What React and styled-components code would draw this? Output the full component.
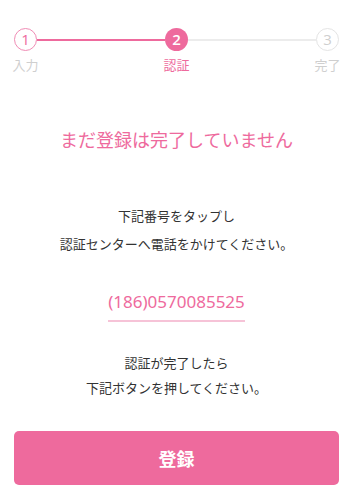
import React from 'react';
import styled, { createGlobalStyle, css } from 'styled-components';

const PINK = '#ee6a9d';
const GREY = '#cfcfcf';

const GlobalStyle = createGlobalStyle`
    html, body {
        margin: 0;
        padding: 0;
        background: #fff;
    }
    body {
        font-family: "Noto Sans CJK JP", "Noto Sans", sans-serif;
        color: #333;
    }
`;

const Page = styled.div`
    padding: 28px 14px 0;
    display: flex;
    flex-direction: column;
    align-items: center;
`;

const Stepper = styled.div`
    align-self: stretch;
    display: flex;
    align-items: flex-start;
`;

const Step = styled.div`
    width: 23px;
    display: flex;
    flex-direction: column;
    align-items: center;
`;

const Circle = styled.div`
    box-sizing: border-box;
    width: 23px;
    height: 23px;
    border-radius: 50%;
    display: flex;
    align-items: center;
    justify-content: center;
    font-size: 15px;
    line-height: 1;
    font-family: "Open Sans", "Noto Sans", sans-serif;
    ${({ $state }) => $state === 'done' && css`
        border: 1.5px solid #f08cb5;
        color: ${PINK};
        background: #fff;
    `}
    ${({ $state }) => $state === 'active' && css`
        background: ${PINK};
        color: #fff;
        font-weight: 600;
    `}
    ${({ $state }) => $state === 'todo' && css`
        border: 1.5px solid #e4e4e4;
        color: ${GREY};
        background: #fff;
    `}
`;

const StepLabel = styled.div`
    margin-top: 5px;
    white-space: nowrap;
    font-size: 13px;
    line-height: 18px;
    color: ${({ $active }) => ($active ? PINK : GREY)};
`;

const Connector = styled.div`
    flex: 1;
    height: 2px;
    margin-top: 10.5px;
    background: ${({ $done }) => ($done ? PINK : '#ececec')};
`;

const Title = styled.h1`
    margin: 52px 0 0;
    font-size: 18px;
    font-weight: 400;
    line-height: 26px;
    color: ${PINK};
    text-align: center;
`;

const Message = styled.p`
    margin: ${({ $top }) => $top}px 0 0;
    font-size: 13px;
    line-height: ${({ $lh }) => $lh}px;
    color: #333;
    text-align: center;
`;

const PhoneLink = styled.a`
    margin-top: 32px;
    display: inline-block;
    padding-bottom: 6px;
    border-bottom: 2px solid #f6c3d7;
    font-size: 17px;
    line-height: 24px;
    color: ${PINK};
    text-decoration: none;
    font-family: "Noto Sans", sans-serif;
`;

const SubmitButton = styled.button`
    align-self: stretch;
    margin-top: 31px;
    height: 54px;
    border: 0;
    border-radius: 5px;
    background: ${PINK};
    color: #fff;
    font-family: inherit;
    font-size: 18px;
    font-weight: 700;
    cursor: pointer;
`;

const steps = [
    { num: 1, label: '入力', state: 'done' },
    { num: 2, label: '認証', state: 'active' },
    { num: 3, label: '完了', state: 'todo' },
];

export default function App() {
    return (
        <>
            <GlobalStyle />
            <Page>
                <Stepper>
                    {steps.map((s, i) => (
                        <React.Fragment key={s.num}>
                            {i > 0 && <Connector $done={steps[i - 1].state === 'done'} />}
                            <Step>
                                <Circle $state={s.state}>{s.num}</Circle>
                                <StepLabel $active={s.state === 'active'}>{s.label}</StepLabel>
                            </Step>
                        </React.Fragment>
                    ))}
                </Stepper>

                <Title>まだ登録は完了していません</Title>

                <Message $top={50} $lh={28}>
                    下記番号をタップし<br />
                    認証センターへ電話をかけてください。
                </Message>

                <PhoneLink href="tel:1860570085525">(186)0570085525</PhoneLink>

                <Message $top={28} $lh={25}>
                    認証が完了したら<br />
                    下記ボタンを押してください。
                </Message>

                <SubmitButton type="button">登録</SubmitButton>
            </Page>
        </>
    );
}
